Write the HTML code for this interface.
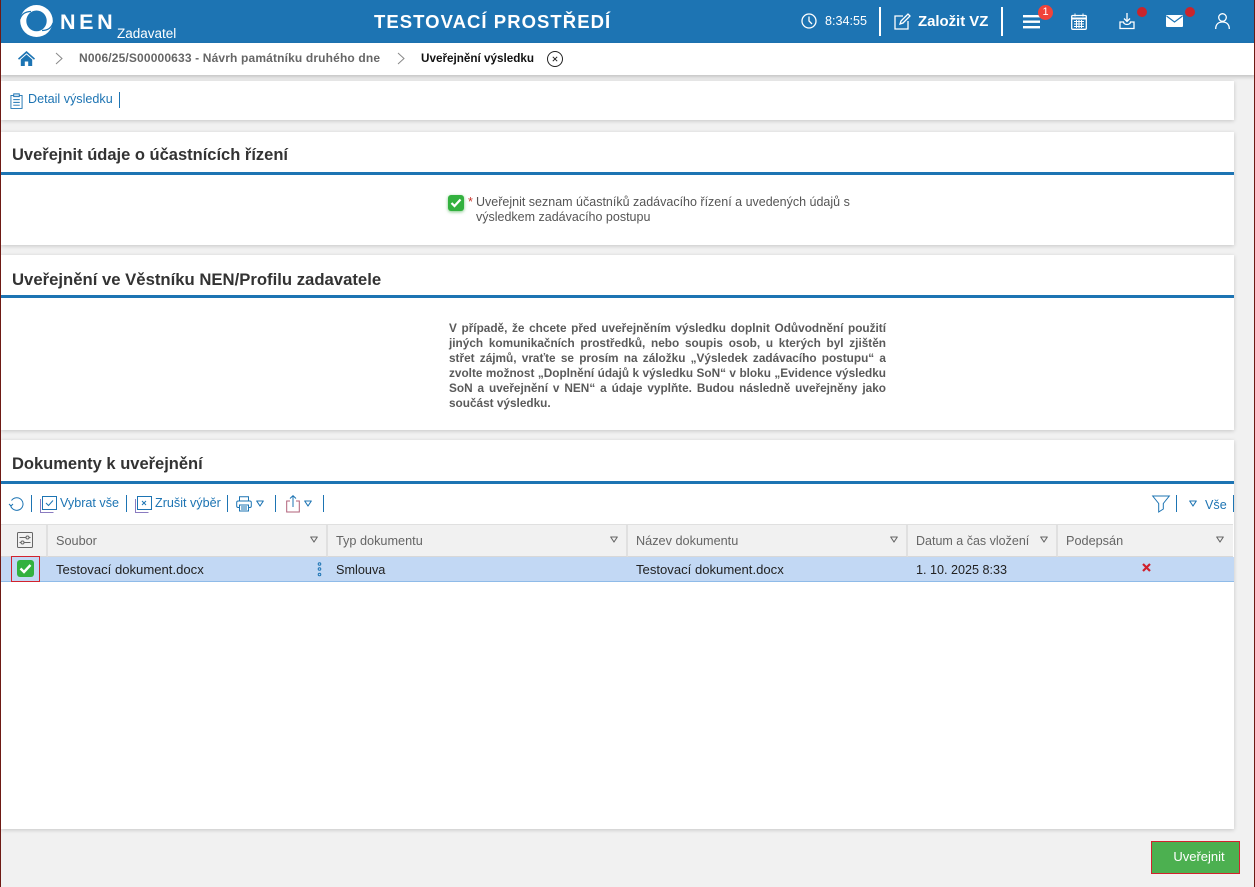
<!DOCTYPE html>
<html lang="cs"><head><meta charset="utf-8"><title>NEN</title>
<style>
*{box-sizing:border-box}
html,body{margin:0;padding:0;width:1255px;height:887px;overflow:hidden;background:#f1f1f1;font-family:"Liberation Sans",sans-serif}
.a{position:absolute;white-space:nowrap}
.card{position:absolute;left:1px;width:1233px;background:#fff;box-shadow:0 1px 4px rgba(0,0,0,.18)}
.h{position:absolute;left:12px;font-size:16.5px;font-weight:bold;color:#333;white-space:nowrap}
.rule{position:absolute;left:1px;width:1233px;height:3px;background:#1d74b3}
.sep{position:absolute;width:1px;background:#1d74b3}
.t{position:absolute;color:#1d74b3;font-size:12.6px;white-space:nowrap}
.th{position:absolute;top:524px;height:33px;background:#f1f1f1;border-right:2px solid #e0e0e0;border-top:1px solid #e0e0e0;border-bottom:1px solid #d8d8d8;color:#666;font-size:12.7px;line-height:32px;padding-left:8px}
.j{position:absolute;left:449px;width:437px;height:14px;font-size:11.8px;line-height:14px;font-weight:bold;color:#5a5a5a;text-align:justify;text-align-last:justify;white-space:nowrap}
.c{position:absolute;top:562px;font-size:13.1px;line-height:15px;color:#222;white-space:nowrap}
svg{position:absolute;overflow:visible}
.tri{fill:none;stroke-width:1.1;stroke-linejoin:round}
</style></head><body>
<div class="a" style="left:0;top:0;width:1255px;height:43px;background:#1d74b3"></div>
<div class="a" style="left:0;top:43px;width:1255px;height:32px;background:#fff;box-shadow:0 2px 4px rgba(0,0,0,.2)"></div>

<svg style="left:20px;top:5px" width="33" height="32" viewBox="0 0 33 32"><path fill="#fff" fill-rule="evenodd" d="M16.500 0a16.300 16 0 1 0 0 32a16.300 16 0 1 0 0-32zM16.500 5.500a10.200 10.400 0 1 1 0 20.800a10.200 10.400 0 1 1 0-20.800z"/><path fill="none" stroke="#1d74b3" stroke-width="1.200" d="M0 14Q2.500 6.500 11 6.500M33 18Q30.500 25.500 22 25.500"/></svg>
<div class="a" style="left:60px;top:8px;font-size:21.5px;line-height:28px;font-weight:bold;color:#fff;letter-spacing:3.6px">NEN</div>
<div class="a" style="left:117px;top:26px;font-size:13.5px;line-height:16px;color:#fff">Zadavatel</div>
<div class="a" style="left:374px;top:10px;font-size:18.5px;line-height:24px;font-weight:bold;color:#fff;letter-spacing:1.05px">TESTOVACÍ PROSTŘEDÍ</div>

<svg style="left:801px;top:13px" width="16" height="16" viewBox="0 0 16 16" fill="none" stroke="#fff" stroke-width="1.3"><circle cx="8" cy="8" r="7"/><path d="M8 3.500V8l3 3"/></svg>
<div class="a" style="left:825px;top:14px;font-size:12.6px;line-height:15px;color:#fff">8:34:55</div>
<div class="a" style="left:879px;top:7px;width:2px;height:29px;background:#fff"></div>
<svg style="left:893px;top:13px" width="18" height="18" viewBox="0 0 18 18" fill="none" stroke="#fff" stroke-width="1.3"><path d="M10 3H2v13h13V8"/><path d="M7 11l1-3 7-7 2 2-7 7z"/></svg>
<div class="a" style="left:918px;top:13px;font-size:14.900px;line-height:18px;font-weight:bold;color:#fff">Založit VZ</div>
<div class="a" style="left:1001px;top:7px;width:2px;height:29px;background:#fff"></div>
<svg style="left:1023px;top:15px" width="17" height="14" viewBox="0 0 17 14" fill="#fff"><rect width="17" height="2.400" y="0"/><rect width="17" height="2.400" y="5.500"/><rect width="17" height="2.400" y="11"/></svg>
<div class="a" style="left:1038px;top:5px;width:15px;height:15px;border-radius:50%;background:#f0433a;color:#fff;font-size:11px;line-height:15px;text-align:center">1</div>
<svg style="left:1071px;top:13px" width="16" height="17" viewBox="0 0 16 17" fill="none" stroke="#fff"><rect x=".7" y="2.500" width="14.600" height="13.800" rx="1" stroke-width="1.300"/><path d="M.7 5.500h14.600" stroke-width="2"/><path d="M4 .5v3M12 .5v3M3 8.500h10M3 11h10M3 13.500h10M5.500 7v8M8 7v8M10.500 7v8" stroke-width="1"/></svg>
<svg style="left:1119px;top:13px" width="16" height="17" viewBox="0 0 16 17" fill="none" stroke="#fff" stroke-width="1.300"><path d="M8 0v8M5 5.500l3 3 3-3"/><path d="M1 9v6.500h14V9h-3.500a3.500 2.500 0 0 1-7 0z"/></svg>
<div class="a" style="left:1137px;top:7px;width:10px;height:10px;border-radius:50%;background:#c9252c"></div>
<svg style="left:1166px;top:15px" width="17" height="12" viewBox="0 0 17 12"><rect width="17" height="12" rx="1" fill="#fff"/><path d="M.5 1l8 6 8-6" fill="none" stroke="#1d74b3" stroke-width="1.100"/></svg>
<div class="a" style="left:1185px;top:7px;width:10px;height:10px;border-radius:50%;background:#c9252c"></div>
<svg style="left:1215px;top:13px" width="15" height="16" viewBox="0 0 15 16" fill="none" stroke="#fff" stroke-width="1.300"><circle cx="7.500" cy="4.500" r="3.800"/><path d="M.7 16c0-4.500 2.500-7 6.800-7s6.800 2.500 6.800 7"/></svg>

<svg style="left:18px;top:51px" width="17" height="15" viewBox="0 0 17 15"><path d="M8.500 0L0 7.500l1 1.200 7.500-6.500 7.500 6.500 1-1.200z" fill="#1d74b3"/><path d="M2.800 8.500L8.500 3.500l5.700 5V15h-4v-4.500H6.800V15h-4z" fill="#1d74b3"/></svg>
<svg style="left:55px;top:52px" width="8" height="13" viewBox="0 0 8 13" fill="none" stroke="#888"><path d="M1 1l6 5.500L1 12"/></svg>
<div class="a" style="left:79px;top:51px;font-size:12px;line-height:15px;font-weight:bold;color:#666;letter-spacing:.15px">N006/25/S00000633 - Návrh památníku druhého dne</div>
<svg style="left:397px;top:52px" width="8" height="13" viewBox="0 0 8 13" fill="none" stroke="#888"><path d="M1 1l6 5.500L1 12"/></svg>
<div class="a" style="left:421px;top:51px;font-size:11.700px;line-height:15px;font-weight:bold;color:#111">Uveřejnění výsledku</div>
<svg style="left:547px;top:51px" width="16" height="16" viewBox="0 0 16 16" fill="none" stroke="#222"><circle cx="8" cy="8" r="7.500"/><path d="M5.800 5.800l4.400 4.400M10.200 5.800l-4.400 4.400"/></svg>

<div class="card" style="top:81px;height:39px"></div>
<svg style="left:10px;top:93px" width="13" height="16" viewBox="0 0 14 17" fill="none" stroke="#1d74b3"><path d="M4 2.500H1v14h12v-14h-3"/><rect x="4" y=".8" width="6" height="3" fill="#cfe2f0"/><path d="M3.500 7h7M3.500 10h7M3.500 13h7"/></svg>
<div class="t" style="left:28px;top:92px;line-height:15px">Detail výsledku</div>
<div class="sep" style="left:119px;top:92px;height:16px"></div>

<div class="card" style="top:132px;height:113px"></div>
<div class="h" style="top:145px;line-height:21px">Uveřejnit údaje o účastnících řízení</div>
<div class="rule" style="top:172px"></div>
<div class="a" style="left:448px;top:195px;width:16px;height:16px;border-radius:3px;background:#33b13f;box-shadow:0 1px 3px rgba(40,160,50,.6)"></div>
<svg style="left:450px;top:198px" width="12" height="10" viewBox="0 0 12 10" fill="none" stroke="#fff" stroke-width="2.200"><path d="M1.500 5l3 3 6-6.500"/></svg>
<div class="a" style="left:468px;top:195px;font-size:12.500px;line-height:15px;color:#c9352c">*</div>
<div class="a" style="left:476px;top:195px;font-size:12.500px;line-height:15px;color:#555">Uveřejnit seznam účastníků zadávacího řízení a uvedených údajů s</div>
<div class="a" style="left:476px;top:210px;font-size:12.500px;line-height:15px;color:#555">výsledkem zadávacího postupu</div>

<div class="card" style="top:255px;height:175px"></div>
<div class="h" style="top:269px;line-height:21px;font-size:16.7px">Uveřejnění ve Věstníku NEN/Profilu zadavatele</div>
<div class="rule" style="top:295px"></div>
<div class="j" style="top:321px">V případě, že chcete před uveřejněním výsledku doplnit Odůvodnění použití</div>
<div class="j" style="top:336px">jiných komunikačních prostředků, nebo soupis osob, u kterých byl zjištěn</div>
<div class="j" style="top:351px">střet zájmů, vraťte se prosím na záložku „Výsledek zadávacího postupu“ a</div>
<div class="j" style="top:366px">zvolte možnost „Doplnění údajů k výsledku SoN“ v bloku „Evidence výsledku</div>
<div class="j" style="top:381px">SoN a uveřejnění v NEN“ a údaje vyplňte. Budou následně uveřejněny jako</div>
<div class="j" style="top:396px;text-align-last:left">součást výsledku.</div>

<div class="card" style="top:440px;height:389px"></div>
<div class="h" style="top:454px;line-height:21px">Dokumenty k uveřejnění</div>
<div class="rule" style="top:481px"></div>

<svg style="left:9px;top:497px" width="15" height="14" viewBox="0 0 15 14" fill="none" stroke="#1d74b3"><path d="M2.500 3.500A6.300 6.300 0 1 1 1.500 8"/><path d="M0 7l2 2 2-2"/></svg>
<div class="sep" style="left:31px;top:495px;height:17px"></div>
<svg style="left:40px;top:496px" width="17" height="17" viewBox="0 0 17 17" fill="none" stroke="#1d74b3"><rect x="2.500" y=".5" width="14" height="13"/><path d="M.5 3v13.500h13" stroke="#8a7bc0"/><path d="M6 7l2.500 2.500L13 4.500"/></svg>
<div class="t" style="left:60px;top:496px;line-height:15px">Vybrat vše</div>
<div class="sep" style="left:126px;top:495px;height:17px"></div>
<svg style="left:135px;top:496px" width="17" height="17" viewBox="0 0 17 17" fill="none" stroke="#1d74b3"><rect x="2.500" y=".5" width="14" height="13"/><path d="M.5 3v13.500h13" stroke="#8a7bc0"/><path d="M7 5l4 4M11 5l-4 4"/></svg>
<div class="t" style="left:155px;top:496px;line-height:15px">Zrušit výběr</div>
<div class="sep" style="left:227px;top:495px;height:17px"></div>
<svg style="left:236px;top:496px" width="16" height="16" viewBox="0 0 16 16" fill="none" stroke="#1d74b3"><path d="M3.500 5V.8h9V5"/><rect x=".7" y="5" width="14.600" height="6.500" rx="1.500"/><rect x="3.500" y="9" width="9" height="6" fill="#fff"/><path d="M5 11h6M5 13h6"/></svg>
<svg style="left:256px;top:500px" class="tri" width="8" height="7" viewBox="0 0 8 7" stroke="#1d74b3"><path d="M.7 1h6.600L4 6z"/></svg>
<div class="sep" style="left:275px;top:495px;height:17px"></div>
<svg style="left:286px;top:495px" width="14" height="18" viewBox="0 0 14 18" fill="none" stroke="#b0607a"><path d="M4 6H.7v11h12.600V6H10"/><path d="M7 12V1M4 3.500L7 .7l3 2.800" stroke="#1d74b3"/></svg>
<svg style="left:304px;top:500px" class="tri" width="8" height="7" viewBox="0 0 8 7" stroke="#1d74b3"><path d="M.7 1h6.600L4 6z"/></svg>
<div class="sep" style="left:323px;top:495px;height:17px"></div>

<svg style="left:1152px;top:495px" width="18" height="18" viewBox="0 0 18 18" fill="none" stroke="#1d74b3"><path d="M.7 1h16.600l-6 7.500V14l-4.600 3V8.500z"/></svg>
<div class="sep" style="left:1176px;top:495px;height:17px"></div>
<svg style="left:1189px;top:500px" class="tri" width="8" height="7" viewBox="0 0 8 7" stroke="#1d74b3"><path d="M.7 1h6.600L4 6z"/></svg>
<div class="t" style="left:1205px;top:498px;line-height:15px">Vše</div>
<div class="sep" style="left:1233px;top:495px;height:17px"></div>

<div class="th" style="left:1px;width:47px"></div>
<svg style="left:17px;top:532px" width="16" height="16" viewBox="0 0 16 16" fill="none" stroke="#666"><rect x=".5" y=".5" width="15" height="15" rx="1"/><path d="M2.500 5.500h6.500M12 5.500h1.500M2.500 10.500h1.500M7 10.500h6.500"/><circle cx="10.500" cy="5.500" r="1.500"/><circle cx="5.500" cy="10.500" r="1.500"/></svg>
<div class="th" style="left:48px;width:280px">Soubor</div>
<div class="th" style="left:328px;width:300px">Typ dokumentu</div>
<div class="th" style="left:628px;width:280px">Název dokumentu</div>
<div class="th" style="left:908px;width:150px;font-size:12.5px">Datum a čas vložení</div>
<div class="th" style="left:1058px;width:175px;border-right:0">Podepsán</div>
<svg style="left:310px;top:536px" class="tri" width="8" height="7" viewBox="0 0 8 7" stroke="#666"><path d="M.7 1h6.600L4 6z"/></svg>
<svg style="left:610px;top:536px" class="tri" width="8" height="7" viewBox="0 0 8 7" stroke="#666"><path d="M.7 1h6.600L4 6z"/></svg>
<svg style="left:890px;top:536px" class="tri" width="8" height="7" viewBox="0 0 8 7" stroke="#666"><path d="M.7 1h6.600L4 6z"/></svg>
<svg style="left:1040px;top:536px" class="tri" width="8" height="7" viewBox="0 0 8 7" stroke="#666"><path d="M.7 1h6.600L4 6z"/></svg>
<svg style="left:1216px;top:536px" class="tri" width="8" height="7" viewBox="0 0 8 7" stroke="#666"><path d="M.7 1h6.600L4 6z"/></svg>

<div class="a" style="left:1px;top:557px;width:1233px;height:25px;background:#c2d8f4;border-bottom:1px solid #8fbbe8"></div>
<div class="a" style="left:11px;top:556px;width:29px;height:26px;border:1px solid #d2222d"></div>
<div class="a" style="left:17px;top:560px;width:17px;height:17px;border-radius:3px;background:#33b13f"></div>
<svg style="left:19px;top:563px" width="13" height="11" viewBox="0 0 13 11" fill="none" stroke="#fff" stroke-width="2.400"><path d="M1.500 5.500l3.500 3.500 6.500-7"/></svg>
<div class="c" style="left:56px">Testovací dokument.docx</div>
<svg style="left:317px;top:562px" width="5" height="15" viewBox="0 0 5 15" fill="none" stroke="#1d74b3"><circle cx="2.500" cy="2" r="1.300"/><circle cx="2.500" cy="7" r="1.300"/><circle cx="2.500" cy="12.500" r="1.300"/></svg>
<div class="c" style="left:336px;font-size:12.700px;top:563px">Smlouva</div>
<div class="c" style="left:636px">Testovací dokument.docx</div>
<div class="c" style="left:916px;font-size:12.600px;top:563px">1. 10. 2025 8:33</div>
<svg style="left:1142px;top:563px" width="9" height="9" viewBox="0 0 9 9" fill="none" stroke="#d0202c" stroke-width="2.200"><path d="M1 1l7 7M8 1l-7 7"/></svg>

<div class="a" style="left:1151px;top:841px;width:89px;height:33px;background:#4cb050;border:1px solid #d2222d;color:#fff;font-size:13px;line-height:30px;text-align:center;padding-left:7px">Uveřejnit</div>

<div class="a" style="left:0;top:0;width:1px;height:887px;background:#6e1a14"></div>
<div class="a" style="left:1254px;top:0;width:1px;height:887px;background:#6e1a14"></div>
</body></html>
